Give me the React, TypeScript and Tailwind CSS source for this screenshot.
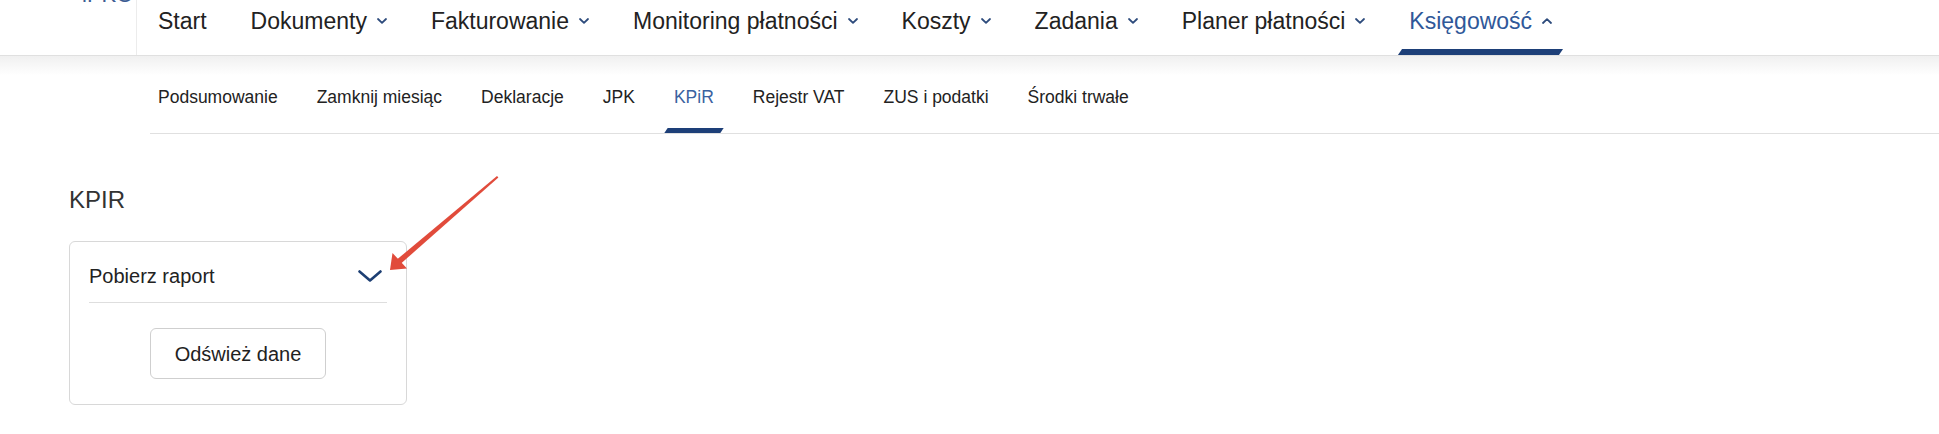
import React from "react";

const topItems = [
  { label: "Start", caret: false },
  { label: "Dokumenty", caret: true },
  { label: "Fakturowanie", caret: true },
  { label: "Monitoring płatności", caret: true },
  { label: "Koszty", caret: true },
  { label: "Zadania", caret: true },
  { label: "Planer płatności", caret: true },
  { label: "Księgowość", caret: true, active: true },
];

const subItems = [
  "Podsumowanie",
  "Zamknij miesiąc",
  "Deklaracje",
  "JPK",
  "KPiR",
  "Rejestr VAT",
  "ZUS i podatki",
  "Środki trwałe",
];

function Caret({ up, className }: { up?: boolean; className?: string }) {
  return (
    <svg width="10" height="6" viewBox="0 0 10 6" className={className}>
      <polyline
        points={up ? "1,5 5,1.2 9,5" : "1,1 5,4.8 9,1"}
        fill="none"
        stroke="currentColor"
        strokeWidth="1.8"
        strokeLinecap="round"
        strokeLinejoin="round"
      />
    </svg>
  );
}

function TopNav() {
  return (
    <div className="flex h-[56px] border-b border-[#e0e0e0] bg-white">
      <div className="w-[137px] h-[55px] border-r border-[#ececec] overflow-hidden">
        <div className="-mt-[19px] pl-[82px] text-[22px] leading-[28px] text-[#3b5c93]">iPKO</div>
      </div>
      <div className="flex gap-[24px] pl-[11px]">
        {topItems.map((item) => (
          <div key={item.label} className="relative flex items-start h-[55px] px-[10px] pt-[7px]">
            <span
              className={`text-[23px] leading-[28px] ${item.active ? "text-[#2f5899]" : "text-[#222]"}`}
            >
              {item.label}
            </span>
            {item.caret && (
              <Caret up={item.active} className="ml-[10px] mt-[11px] text-[#2d4b7c]" />
            )}
            {item.active && (
              <div className="absolute left-[1px] right-[1px] bottom-0 h-[6px] bg-[#1d3f78] -skew-x-[34deg]" />
            )}
          </div>
        ))}
      </div>
    </div>
  );
}

function SubNav() {
  return (
    <div className="bg-linear-to-b from-[#f0f0f0] from-0% to-white to-25%">
      <div className="ml-[150px] flex gap-[23px] border-b border-[#e0e0e0]">
        {subItems.map((label) => (
          <div key={label} className="relative h-[77px] px-[8px] pt-[29px]">
            <span
              className={`text-[17.5px] leading-[24px] ${label === "KPiR" ? "text-[#3a62a0]" : "text-[#222]"}`}
            >
              {label}
            </span>
            {label === "KPiR" && (
              <div className="absolute left-0 right-0 bottom-0 h-[5px] bg-[#1d3f78] -skew-x-[34deg]" />
            )}
          </div>
        ))}
      </div>
    </div>
  );
}

function ReportCard() {
  return (
    <div className="w-[338px] rounded-[6px] border border-[#d8d8d8] bg-white px-[19px] pt-[20px] pb-[25px]">
      <div className="flex items-center justify-between border-b border-[#dedede] pb-[12px]">
        <span className="text-[20px] leading-[28px] text-[#222]">Pobierz raport</span>
        <svg width="24" height="12" viewBox="0 0 24 12" className="mr-[5px] text-[#1d3f73]">
          <polyline
            points="1.5,1.5 12,10.5 22.5,1.5"
            fill="none"
            stroke="currentColor"
            strokeWidth="2.6"
            strokeLinecap="round"
            strokeLinejoin="round"
          />
        </svg>
      </div>
      <div className="flex justify-center mt-[25px]">
        <button className="w-[176px] h-[51px] rounded-[6px] border border-[#cfcfcf] bg-white text-[20px] text-[#222]">
          Odśwież dane
        </button>
      </div>
    </div>
  );
}

export default function App() {
  return (
    <div className="relative min-h-screen bg-white font-['Liberation_Sans',Arial,sans-serif]">
      <TopNav />
      <SubNav />
      <main className="pl-[69px] pt-[50px]">
        <h1 className="text-[24px] leading-[32px] text-[#333] mb-[25px]">KPIR</h1>
        <ReportCard />
      </main>
      {/* red annotation arrow */}
      <svg className="absolute left-0 top-0 pointer-events-none" width="600" height="300">
        <polygon points="497,176 498.4,177.6 400.4,264 396.6,259.8" fill="#e14b3b" />
        <polygon points="390,270 392.5,253 407,268.5" fill="#e14b3b" />
      </svg>
    </div>
  );
}
